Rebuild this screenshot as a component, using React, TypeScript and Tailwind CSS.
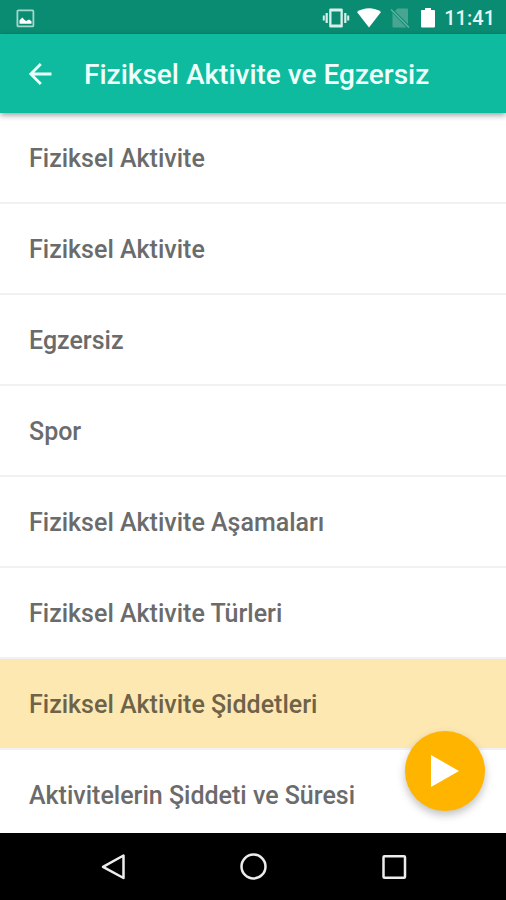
const topics = [
  { id: 1, title: 'Fiziksel Aktivite' },
  { id: 2, title: 'Fiziksel Aktivite' },
  { id: 3, title: 'Egzersiz' },
  { id: 4, title: 'Spor' },
  { id: 5, title: 'Fiziksel Aktivite Aşamaları' },
  { id: 6, title: 'Fiziksel Aktivite Türleri' },
  { id: 7, title: 'Fiziksel Aktivite Şiddetleri' },
  { id: 8, title: 'Aktivitelerin Şiddeti ve Süresi' },
];

const activeTopic = 7;

function StatusBar() {
  return (
    <div className="flex h-[34px] shrink-0 items-center justify-between bg-[#0a8c73] pt-0.5 pr-[11px] pl-4">
      <svg width="19" height="19" viewBox="0 0 19 19" aria-hidden="true">
        <rect x="1.4" y="1.4" width="16" height="16" rx="1" fill="none" stroke="#a5d8cc" strokeWidth="1.8" />
        <path d="M3.5 14.8V11.2L6.3 8.6L8.6 11L10.2 12L13 10.6L15.5 12.2V14.8Z" fill="#fff" />
      </svg>
      <div className="flex items-center">
        <svg width="28" height="22" viewBox="0 0 28 22" fill="#d8f0ea" aria-hidden="true">
          <path d="M8.500 1.500h11a1.300 1.300 0 0 1 1.300 1.300v16.400a1.300 1.300 0 0 1-1.300 1.300h-11a1.300 1.300 0 0 1-1.300-1.300V2.800a1.300 1.300 0 0 1 1.300-1.300ZM9.500 4.500v13h9v-13Z" fillRule="evenodd" />
          <path d="M3.600 6h2.200v10H3.600ZM.8 8.500h2v5h-2ZM22.200 6h2.200v10h-2.200ZM25.200 8.500h2v5h-2Z" />
        </svg>
        <svg className="ml-1.5" width="26" height="22" viewBox="0 0 26 22" aria-hidden="true">
          <path d="M1 5C8 0 18 0 25 5L13 20.500Z" fill="#fff" />
        </svg>
        <svg className="ml-2" width="20" height="22" viewBox="0 0 20 22" aria-hidden="true">
          <path d="M7.500 1.500H17a1 1 0 0 1 1 1V17L5 4ZM2.500 6L16.500 20.500H3.500a1 1 0 0 1-1-1Z" fill="#48a592" />
          <path d="M1 2.500L19 20.500" stroke="#5fb3a2" strokeWidth="1.600" />
        </svg>
        <svg className="ml-2.5" width="16" height="22" viewBox="0 0 16 22" aria-hidden="true">
          <path d="M5 1h6v2h3a1 1 0 0 1 1 1v15.500a1 1 0 0 1-1 1H2a1 1 0 0 1-1-1V4a1 1 0 0 1 1-1h3Z" fill="#fff" />
        </svg>
        <time className="ml-2 text-[20px] leading-6 font-medium text-[#e4f5f1]">11:41</time>
      </div>
    </div>
  );
}

function AppBar() {
  return (
    <header className="relative z-10 flex h-[79px] shrink-0 items-center bg-[#0fbb9e] pl-4 shadow-[0_2px_6px_rgba(0,0,0,0.4)]">
      <button type="button" aria-label="Geri" className="flex size-12 items-center justify-center">
        <svg width="26" height="24" viewBox="0 0 26 24" fill="none" stroke="#e9fffa" strokeWidth="2.800" aria-hidden="true">
          <path d="M24.500 12H3.500M13.800 2L3.800 12L13.800 22" />
        </svg>
      </button>
      <h1 className="ml-5 truncate pt-0.5 text-[28px] leading-9 font-medium text-[#effffc]">Fiziksel Aktivite ve Egzersiz</h1>
    </header>
  );
}

function TopicList() {
  return (
    <ul className="h-full overflow-y-auto [scrollbar-width:none]">
      {topics.map((topic) => (
        <li key={topic.id} className="border-b-2 border-[#f1f1f1]">
          <button
            type="button"
            className={
              topic.id === activeTopic
                ? 'flex h-[89px] w-full items-center bg-[#fee8b2] px-[29px] pt-[3px] text-left text-[25px] leading-8 font-medium text-[#6e6249]'
                : 'flex h-[89px] w-full items-center bg-white px-[29px] pt-[3px] text-left text-[25px] leading-8 font-medium text-[#6b6b6b]'
            }
          >
            {topic.title}
          </button>
        </li>
      ))}
    </ul>
  );
}

function NavigationBar() {
  return (
    <nav className="flex h-[67px] shrink-0 items-center justify-center gap-[92px] bg-black pl-0.5">
      <button type="button" aria-label="Geri dön" className="flex size-12 items-center justify-center">
        <svg width="28" height="28" viewBox="0 0 28 28" fill="none" stroke="#ededed" strokeWidth="2.500" strokeLinejoin="round" aria-hidden="true">
          <path d="M23.500 2.500V25L3 13.800Z" />
        </svg>
      </button>
      <button type="button" aria-label="Ana ekran" className="flex size-12 items-center justify-center">
        <svg width="28" height="28" viewBox="0 0 28 28" fill="none" stroke="#ededed" strokeWidth="2.500" aria-hidden="true">
          <circle cx="13.500" cy="13.500" r="12" />
        </svg>
      </button>
      <button type="button" aria-label="Son uygulamalar" className="flex size-12 items-center justify-center">
        <svg width="28" height="28" viewBox="0 0 28 28" fill="none" stroke="#ededed" strokeWidth="2.500" aria-hidden="true">
          <rect x="3.500" y="3.200" width="21.500" height="21.500" rx="1" />
        </svg>
      </button>
    </nav>
  );
}

export default function App() {
  return (
    <div className="flex h-screen flex-col bg-white font-[Roboto,sans-serif]">
      <StatusBar />
      <AppBar />
      <main className="relative min-h-0 flex-1">
        <TopicList />
        <button
          type="button"
          aria-label="Oynat"
          className="absolute right-[21px] bottom-[22px] flex size-20 items-center justify-center rounded-full bg-[#ffb400] shadow-[0_4px_8px_rgba(0,0,0,0.25)]"
        >
          <svg width="28" height="32" viewBox="0 0 28 32" fill="#fff" aria-hidden="true">
            <path d="M0 0L28 16L0 32Z" />
          </svg>
        </button>
      </main>
      <NavigationBar />
    </div>
  );
}
